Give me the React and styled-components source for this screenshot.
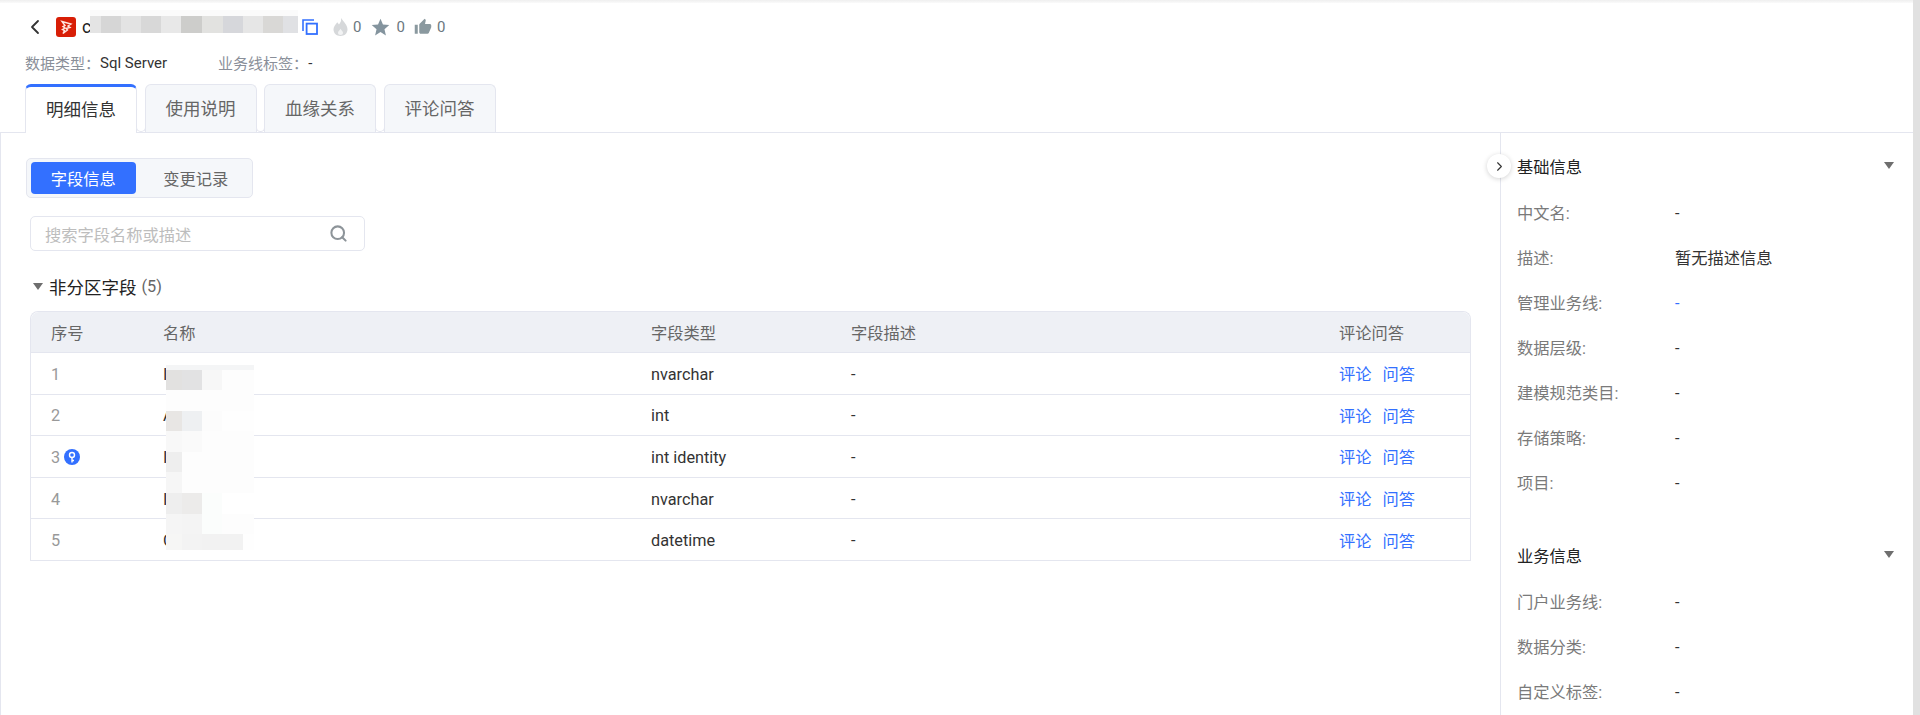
import styled, { createGlobalStyle } from 'styled-components';
import { ChevronLeft, ChevronRight, Search } from 'lucide-react';
import { MdStar, MdThumbUp } from 'react-icons/md';

const FONT_STACK = `Roboto, "Noto Sans CJK SC", sans-serif`;

const TITLE_CELLS = ['#e4e4e4', '#d6d6d6', '#e3e3e3', '#d8d8d8', '#e8e8e8', '#cdcdcb', '#e2e2e0', '#d6d7db', '#e6e6e6', '#d9d8d6', '#e0e1e4'];
const TITLE_WIDTHS = [11, 20, 20, 20, 20, 21, 21, 20, 20, 20, 15];

const NAME_MOSAIC = [
  { height: 5, cells: ['#f4f5f6', '#f4f5f6', '#f4f5f6', '#f4f5f6', '#f4f5f6'] },
  { height: 20, cells: ['#e2e1e0', '#e2e2e3', '#f7f7f7', '#fdfdfd', '#fdfdfd'] },
  { height: 21, cells: ['#fdfdfd', '#fdfdfd', '#fdfdfd', '#fdfdfd', '#fdfdfd'] },
  { height: 20, cells: ['#e8e6e4', '#eef0f2', '#fcfcfc', '#fefefe', '#fefefe'] },
  { height: 21, cells: ['#f8f8f8', '#fafafa', '#fdfdfd', '#fdfdfd', '#fdfdfd'] },
  { height: 20, cells: ['#eeeeee', '#fdfdfd', '#fdfdfd', '#fdfdfd', '#fdfdfd'] },
  { height: 21, cells: ['#f6f6f6', '#fdfdfd', '#fdfdfd', '#fdfdfd', '#fdfdfd'] },
  { height: 21, cells: ['#eeeeee', '#ecebea', '#fbfdfc', '#ffffff', '#ffffff'] },
  { height: 20, cells: ['#f5f5f5', '#f4f4f4', '#fbfdfc', '#fdfdfd', '#fdfdfd'] },
  { height: 16, cells: ['#f6f6f5', '#f3f3f3', '#f2f2f2', '#f2f2f2', '#fefefe'] },
];
const NAME_WIDTHS = [16, 20, 20, 21, 11];

const FIELDS = [
  { no: 1, letter: 'I', type: 'nvarchar' },
  { no: 2, letter: 'A', type: 'int' },
  { no: 3, letter: 'I', type: 'int identity', primary: true },
  { no: 4, letter: 'I', type: 'nvarchar' },
  { no: 5, letter: 'C', type: 'datetime' },
];

const BASIC_INFO = [
  { label: '中文名:', value: '-' },
  { label: '描述:', value: '暂无描述信息' },
  { label: '管理业务线:', value: '-', link: true },
  { label: '数据层级:', value: '-' },
  { label: '建模规范类目:', value: '-' },
  { label: '存储策略:', value: '-' },
  { label: '项目:', value: '-' },
];

const BUSINESS_INFO = [
  { label: '门户业务线:', value: '-' },
  { label: '数据分类:', value: '-' },
  { label: '自定义标签:', value: '-' },
];

function SideSection({ title, rows }) {
  return (
    <Section>
      <SectionHead>
        <span>{title}</span>
        <Caret />
      </SectionHead>
      {rows.map((row) => (
        <InfoRow key={row.label}>
          <InfoLabel>{row.label}</InfoLabel>
          <InfoValue $link={row.link} $dash={row.value === '-'}>{row.value}</InfoValue>
        </InfoRow>
      ))}
    </Section>
  );
}

export default function App() {
  return (
    <>
      <GlobalStyle />
      <Page>
        <Content>
          <TopShade />
          <Header>
            <TitleRow>
              <BackIcon size={24} strokeWidth={1.8} />
              <Logo viewBox="0 0 20 20">
                <rect width="20" height="20" rx="3" fill="#d81e06" />
                <path d="M6 4.500l9 2.500-3 2 2 1.500-4 1 1.500 1.500-4.500 3.500 1.500-3-2-1 2.500-1.500-2-1.500 2-1z" fill="none" stroke="#ffe6e0" strokeWidth="1.400" />
              </Logo>
              <TitleText>
                c
                <TitleMosaic>
                  <TitleFade />
                  <TitleCells>
                    {TITLE_CELLS.map((color, i) => (
                      <MosaicCell key={color} $color={color} $width={TITLE_WIDTHS[i]} />
                    ))}
                  </TitleCells>
                </TitleMosaic>
              </TitleText>
              <CopyIcon viewBox="0 0 16 16">
                <path d="M1 12V1h11" fill="none" stroke="#3370ff" strokeWidth="1.600" />
                <rect x="4.600" y="4.600" width="10.400" height="10.400" fill="none" stroke="#3370ff" strokeWidth="1.800" />
              </CopyIcon>
              <Stats>
                <Stat>
                  <svg width="15" height="18" viewBox="0 0 15 18">
                    <path d="M8 0c.6 3-.6 4.500-2 6.500C5.200 5.700 4.800 5 4.300 4.300 2 7 .5 9 .5 11.500.5 15.200 3.500 18 7.500 18s7-2.800 7-6.500C14.500 7 10.500 3.500 8 0z" fill="#d6d8da" />
                    <path d="M7.500 17c-1.500 0-2.500-1-2.500-2.300 0-1.300 1.400-2.300 2.500-4 1.100 1.700 2.500 2.700 2.500 4 0 1.300-1 2.300-2.500 2.300z" fill="#f2f3f4" />
                  </svg>
                  <StatCount>0</StatCount>
                </Stat>
                <Stat>
                  <MdStar size={21} color="#84949e" />
                  <StatCount>0</StatCount>
                </Stat>
                <Stat>
                  <MdThumbUp size={18} color="#8a999f" />
                  <StatCount>0</StatCount>
                </Stat>
              </Stats>
            </TitleRow>
            <MetaRow>
              <MetaItem>
                <MetaLabel>数据类型：</MetaLabel>
                <MetaValue>Sql Server</MetaValue>
              </MetaItem>
              <MetaItem>
                <MetaLabel>业务线标签：</MetaLabel>
                <MetaValue>-</MetaValue>
              </MetaItem>
            </MetaRow>
          </Header>

          <TabBar>
            <Tab $active>明细信息</Tab>
            <TabGap />
            <Tab>使用说明</Tab>
            <TabGap />
            <Tab>血缘关系</Tab>
            <TabGap />
            <Tab>评论问答</Tab>
          </TabBar>

          <Body>
            <Main>
              <Segmented>
                <SegmentButton $active>字段信息</SegmentButton>
                <SegmentButton>变更记录</SegmentButton>
              </Segmented>

              <SearchBox>
                <Placeholder>搜索字段名称或描述</Placeholder>
                <Search size={19} color="#8d9499" strokeWidth={2.6} />
              </SearchBox>

              <GroupTitle>
                <Caret />
                <GroupName>非分区字段</GroupName>
                <GroupCount>(5)</GroupCount>
              </GroupTitle>

              <Table>
                <HeadRow>
                  <span>序号</span>
                  <span>名称</span>
                  <span>字段类型</span>
                  <span>字段描述</span>
                  <span>评论问答</span>
                </HeadRow>
                {FIELDS.map((field) => (
                  <Row key={field.no}>
                    <SeqCell>
                      {field.no}
                      {field.primary && (
                        <KeyBadge viewBox="0 0 16 16">
                          <circle cx="8" cy="8" r="8" fill="#3370ff" />
                          <circle cx="8" cy="6" r="2.500" fill="none" stroke="#fff" strokeWidth="1.400" />
                          <path d="M8 8.500v5M8 11.500h2" fill="none" stroke="#fff" strokeWidth="1.400" />
                        </KeyBadge>
                      )}
                    </SeqCell>
                    <NameCell>{field.letter}</NameCell>
                    <TextCell>{field.type}</TextCell>
                    <TextCell>-</TextCell>
                    <Actions>
                      <ActionLink>评论</ActionLink>
                      <ActionLink>问答</ActionLink>
                    </Actions>
                  </Row>
                ))}
                <NameMosaic>
                  {NAME_MOSAIC.map((row) => (
                    <MosaicRow key={row.cells.join() + row.height} $height={row.height}>
                      {row.cells.map((color, i) => (
                        <MosaicCell key={i} $color={color} $width={NAME_WIDTHS[i]} />
                      ))}
                    </MosaicRow>
                  ))}
                </NameMosaic>
              </Table>
            </Main>

            <Side>
              <CollapseButton>
                <ChevronRight size={15} strokeWidth={1.8} color="#333" />
              </CollapseButton>
              <SideSection title="基础信息" rows={BASIC_INFO} />
              <SideSection title="业务信息" rows={BUSINESS_INFO} />
            </Side>
          </Body>
        </Content>
        <ScrollTrack />
      </Page>
    </>
  );
}

const GlobalStyle = createGlobalStyle`
  html, body {
    margin: 0;
    padding: 0;
    height: 100%;
    overflow: hidden;
    background: #fff;
  }
  body {
    font-family: ${FONT_STACK};
    font-size: 16.25px;
    color: #333;
  }
`;

const Page = styled.div`
  display: flex;
  width: 1920px;
  height: 715px;
  overflow: hidden;
`;

const Content = styled.div`
  display: flex;
  flex-direction: column;
  width: 1913px;
  height: 715px;
`;

const ScrollTrack = styled.div`
  width: 7px;
  background: #e1e1e1;
`;

const TopShade = styled.div`
  height: 3px;
  background: linear-gradient(#efefef, #fafafa);
`;

const Header = styled.div`
  display: flex;
  flex-direction: column;
  height: 81px;
  padding-left: 25px;
`;

const TitleRow = styled.div`
  display: flex;
  align-items: center;
  height: 48px;
`;

const BackIcon = styled(ChevronLeft)`
  margin: 0 -2px 0 -2px;
  color: #333;
  flex: none;
`;

const Logo = styled.svg`
  width: 20px;
  height: 20px;
  margin-left: 11px;
  flex: none;
`;

const TitleText = styled.div`
  position: relative;
  width: 216px;
  margin-left: 6px;
  font-size: 17.5px;
  line-height: 24px;
  color: #222;
`;

const TitleMosaic = styled.div`
  position: absolute;
  left: 8px;
  top: -5px;
  display: flex;
  flex-direction: column;
`;

const TitleFade = styled.div`
  height: 6px;
  background: #fbfbfb;
`;

const TitleCells = styled.div`
  display: flex;
  height: 17px;
`;

const MosaicCell = styled.div`
  flex: none;
  width: ${(p) => p.$width}px;
  background: ${(p) => p.$color};
`;

const CopyIcon = styled.svg`
  width: 16px;
  height: 16px;
  margin-left: 4px;
  flex: none;
`;

const Stats = styled.div`
  display: flex;
  align-items: center;
  gap: 9px;
  margin-left: 15px;
`;

const Stat = styled.div`
  display: flex;
  align-items: center;
  gap: 5px;
`;

const StatCount = styled.span`
  font-size: 15px;
  color: #6b7780;
`;

const MetaRow = styled.div`
  display: flex;
  align-items: center;
  gap: 51px;
  height: 22px;
  font-size: 15px;
`;

const MetaItem = styled.div`
  display: flex;
  align-items: center;
`;

const MetaLabel = styled.span`
  color: #8a8f99;
`;

const MetaValue = styled.span`
  padding-top: 2px;
  color: #333;
`;

const TabBar = styled.div`
  display: flex;
  height: 48px;
  padding-left: 25px;
  border-bottom: 1px solid #e4e6ef;
  flex: none;
`;

const Tab = styled.div`
  display: flex;
  align-items: center;
  justify-content: center;
  box-sizing: border-box;
  width: 112px;
  height: ${(p) => (p.$active ? '49px' : '48px')};
  padding-bottom: ${(p) => (p.$active ? '3px' : '2px')};
  font-size: 17.5px;
  color: ${(p) => (p.$active ? '#333' : '#666')};
  background: ${(p) => (p.$active ? '#fff' : '#f5f7fa')};
  border: 1px solid #e4e6ef;
  border-top: ${(p) => (p.$active ? '3px solid #3370ff' : '1px solid #e4e6ef')};
  border-bottom: none;
  border-radius: 6px 6px 0 0;
`;

const TabGap = styled.div`
  align-self: flex-end;
  box-sizing: border-box;
  width: 9.5px;
  height: 8px;
  margin: 0 -1px;
  background: #fff;
  border: 1px solid #e4e6ef;
  border-top: none;
  border-radius: 0 0 5px 5px;
`;

const Body = styled.div`
  display: flex;
  flex: 1;
  min-height: 0;
`;

const Main = styled.div`
  flex: 1;
  min-width: 0;
  box-sizing: border-box;
  padding: 25px 29px 0 25px;
  border-left: 1px solid #e4e6ef;
`;

const Segmented = styled.div`
  display: flex;
  align-items: center;
  box-sizing: border-box;
  width: 227px;
  height: 40px;
  padding: 0 4px;
  background: #f5f7fa;
  border: 1px solid #e4e6ef;
  border-radius: 5px;
`;

const SegmentButton = styled.div`
  display: flex;
  align-items: center;
  justify-content: center;
  box-sizing: border-box;
  width: ${(p) => (p.$active ? '105px' : '113px')};
  height: 32px;
  padding-left: ${(p) => (p.$active ? '0' : '8px')};
  border-radius: 4px;
  color: ${(p) => (p.$active ? '#fff' : '#666')};
  background: ${(p) => (p.$active ? '#3370ff' : 'transparent')};
`;

const SearchBox = styled.div`
  display: flex;
  align-items: center;
  justify-content: space-between;
  box-sizing: border-box;
  width: 335px;
  height: 35px;
  margin: 18px 0 0 4px;
  padding: 0 16px 0 14px;
  border: 1px solid #e4e6ef;
  border-radius: 5px;
`;

const Placeholder = styled.span`
  color: #bdbdbd;
`;

const Caret = styled.i`
  display: block;
  width: 0;
  height: 0;
  border-left: 5.5px solid transparent;
  border-right: 5.5px solid transparent;
  border-top: 7px solid #6e6e6e;
`;

const GroupTitle = styled.div`
  display: flex;
  align-items: center;
  height: 24px;
  margin: 23px 0 13px 7px;
`;

const GroupName = styled.span`
  margin-left: 6px;
  font-size: 17.5px;
  color: #222;
`;

const GroupCount = styled.span`
  margin-left: 5px;
  color: #666;
`;

const Table = styled.div`
  position: relative;
  box-sizing: border-box;
  width: 1441px;
  margin-left: 4px;
  border: 1px solid #e4e6ef;
  border-bottom: none;
  border-radius: 8px 8px 0 0;
`;

const HeadRow = styled.div`
  display: grid;
  grid-template-columns: 112px 488px 200px 488px 1fr;
  align-items: center;
  box-sizing: border-box;
  height: 41px;
  padding-left: 20px;
  color: #666;
  background: #eef0f5;
  border-bottom: 1px solid #e4e6ef;
  border-radius: 8px 8px 0 0;
`;

const Row = styled(HeadRow)`
  height: 41.6px;
  color: #333;
  background: #fff;
  border-radius: 0;
`;

const SeqCell = styled.span`
  display: flex;
  align-items: center;
  gap: 4px;
  padding-top: 2px;
  color: #999;
`;

const KeyBadge = styled.svg`
  width: 16px;
  height: 16px;
`;

const NameCell = styled.span`
  padding-top: 2px;
  color: #333;
`;

const TextCell = styled.span`
  padding-top: 2px;
  color: #333;
`;

const Actions = styled.span`
  display: flex;
  gap: 11px;
`;

const ActionLink = styled.span`
  color: #3370ff;
`;

const NameMosaic = styled.div`
  position: absolute;
  left: 135px;
  top: 53px;
  display: flex;
  flex-direction: column;
`;

const MosaicRow = styled.div`
  display: flex;
  height: ${(p) => p.$height}px;
`;

const Side = styled.div`
  position: relative;
  flex: none;
  box-sizing: border-box;
  width: 413px;
  padding: 10px 19px 0 16px;
  border-left: 1px solid #e4e6ef;
`;

const CollapseButton = styled.div`
  position: absolute;
  left: -14px;
  top: 21px;
  display: flex;
  align-items: center;
  justify-content: center;
  width: 24px;
  height: 24px;
  background: #fff;
  border-radius: 50%;
  box-shadow: 0 1px 5px rgba(0, 0, 0, 0.18);
`;

const Section = styled.section`
  margin-bottom: 28px;
`;

const SectionHead = styled.div`
  display: flex;
  align-items: center;
  justify-content: space-between;
  height: 46px;
  padding-bottom: 1px;
  box-sizing: border-box;
  color: #222;
`;

const InfoRow = styled.div`
  display: flex;
  align-items: center;
  height: 45px;
`;

const InfoLabel = styled.span`
  flex: none;
  width: 158px;
  color: #7a7a7a;
`;

const InfoValue = styled.span`
  padding-top: ${(p) => (p.$dash ? '3px' : '0')};
  color: ${(p) => (p.$link ? '#3370ff' : '#333')};
`;
